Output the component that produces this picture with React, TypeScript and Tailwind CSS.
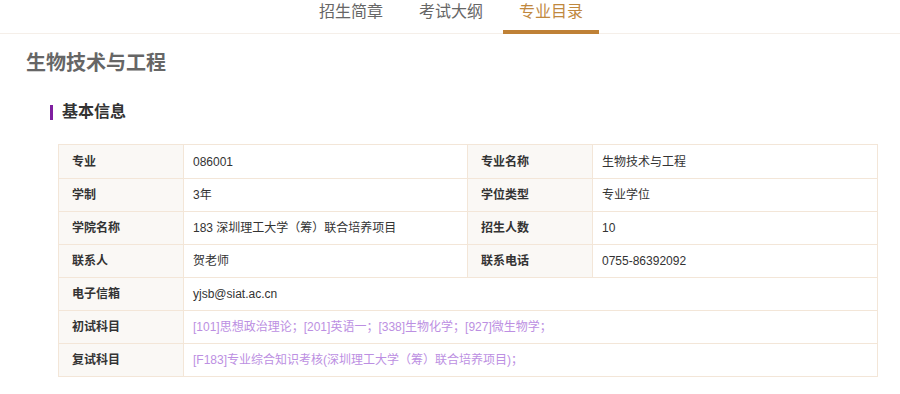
import React from 'react';

const font = { fontFamily: '"Liberation Sans", "Noto Sans CJK SC", sans-serif' };

type Cell = { label: string; value: string; link?: boolean };

const rows: Cell[][] = [
    [{ label: '专业', value: '086001' }, { label: '专业名称', value: '生物技术与工程' }],
    [{ label: '学制', value: '3年' }, { label: '学位类型', value: '专业学位' }],
    [{ label: '学院名称', value: '183 深圳理工大学（筹）联合培养项目' }, { label: '招生人数', value: '10' }],
    [{ label: '联系人', value: '贺老师' }, { label: '联系电话', value: '0755-86392092' }],
    [{ label: '电子信箱', value: 'yjsb@siat.ac.cn' }],
    [{ label: '初试科目', value: '[101]思想政治理论；[201]英语一；[338]生物化学；[927]微生物学；', link: true }],
    [{ label: '复试科目', value: '[F183]专业综合知识考核(深圳理工大学（筹）联合培养项目)；', link: true }],
];

export default function App() {
    const tabs = ['招生简章', '考试大纲', '专业目录'];

    return (
        <div className="w-[900px] h-[394px] bg-white overflow-hidden text-[#333]" style={font}>
            {/* Tabs */}
            <div className="h-[34px] border-b border-[#f5efe9] flex justify-center">
                <div className="flex pl-[2px]">
                    {tabs.map((t, i) => {
                        const active = i === 2;
                        return (
                            <div key={t} className="w-[100px] px-[2px]">
                                <div
                                    className={`h-[34px] flex justify-center pt-[1px] text-[16px] leading-[22px] border-b-4 ${active ? 'border-[#bf8136] text-[#c0883e]' : 'border-transparent text-[#666]'}`}
                                >
                                    {t}
                                </div>
                            </div>
                        );
                    })}
                </div>
            </div>

            <div className="pl-[26px] pt-[15px]">
                <h1 className="text-[20px] leading-[28px] font-bold text-[#666]">生物技术与工程</h1>
            </div>

            <div className="pl-[50px] pt-[24px] flex items-center">
                <span className="w-[3px] h-[15px] bg-[#7f1fa0]" />
                <span className="ml-[9px] text-[16px] leading-[22px] font-bold text-[#333]">基本信息</span>
            </div>

            <div className="ml-[58px] mt-[21px] w-[820px] border border-[#f3e6d8] text-[12px]">
                {rows.map((r, ri) => (
                    <div key={ri} className={`flex h-[33px] ${ri > 0 ? 'border-t border-[#f3e6d8]' : ''}`}>
                        {r.map((c, ci) => (
                            <React.Fragment key={ci}>
                                <div className={`${ci > 0 ? 'w-[125px] border-l border-[#f3e6d8]' : 'w-[124px]'} shrink-0 bg-[#faf8f5] flex items-center pl-[13px] font-bold text-[#333]`}>
                                    {c.label}
                                </div>
                                <div className={`${r.length === 2 ? 'w-[284px]' : 'flex-1'} shrink-0 border-l border-[#f3e6d8] flex items-center pl-[9px] ${c.link ? 'text-[#bc8fe2]' : 'text-[#333]'}`}>
                                    {c.value}
                                </div>
                            </React.Fragment>
                        ))}
                    </div>
                ))}
            </div>
        </div>
    );
}
